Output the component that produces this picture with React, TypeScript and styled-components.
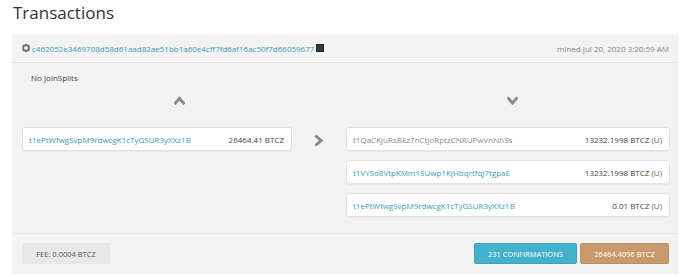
import * as React from 'react';
import styled, { createGlobalStyle } from 'styled-components';

const GlobalStyle = createGlobalStyle`
  body {
    margin: 0;
    background: #fff;
    font-family: "Open Sans", "Liberation Sans", sans-serif;
    color: #333;
  }
`;

const Page = styled.div`
  padding: 1px 12px 0;
`;

const Title = styled.h1`
  margin: 0 0 10px 1px;
  font-size: 17px;
  font-weight: 400;
  line-height: 23px;
  color: #333;
`;

const Panel = styled.div`
  background: #f3f3f3;
  border-right: 1px solid #ececec;
`;

const Header = styled.div`
  display: flex;
  align-items: center;
  height: 28px;
  padding: 0 8px 0 10px;
  border-bottom: 1px solid #e3e3e3;
  font-size: 8px;
`;

const HashLink = styled.a`
  color: #3b9db3;
  text-decoration: none;
  margin-left: 2px;
`;

const CopyIcon = styled.span`
  display: inline-block;
  width: 8px;
  height: 8px;
  margin-left: 2px;
  background: #3a3a3a;
  border: 1px solid #222;
  box-sizing: border-box;
`;

const Mined = styled.span`
  margin-left: auto;
  color: #888;
`;

const Body = styled.div`
  padding: 9px 8px 16px 10px;
  border-bottom: 1px solid #e6e6e6;
`;

const Note = styled.div`
  font-size: 8px;
  line-height: 12px;
  color: #444;
  padding-left: 9px;
`;

const Flow = styled.div`
  display: grid;
  grid-template-columns: 270px 54px 324px;
  margin-top: 11px;
`;

const ChevronCell = styled.div<{ $offset: number }>`
  height: 10px;
  padding-left: ${p => p.$offset}px;
  margin-bottom: 22px;
  display: flex;
  align-items: center;
`;

const Column = styled.div`
  display: flex;
  flex-direction: column;
  gap: 9px;
`;

const ArrowCell = styled.div`
  display: flex;
  justify-content: center;
  padding-top: 1px;
  height: 24px;
  align-items: center;
`;

const AddressBox = styled.div`
  display: flex;
  align-items: center;
  justify-content: space-between;
  height: 24px;
  box-sizing: border-box;
  padding: 0 7px 0 6px;
  background: #fff;
  border: 1px solid #e2e2e2;
  border-radius: 3px;
  box-shadow: 0 1px 1px rgba(0, 0, 0, 0.04);
  font-size: 8px;
`;

const Address = styled.span<{ $muted?: boolean }>`
  color: ${p => (p.$muted ? '#8a8a8a' : '#3b9db3')};
`;

const Amount = styled.span`
  color: #444;
`;

const Unspent = styled.span`
  color: #56703f;
`;

const Footer = styled.div`
  display: flex;
  align-items: center;
  gap: 3px;
  padding: 9px 8px 10px 10px;
`;

const tones = {
  fee: { bg: '#e8e8e8', border: '#e8e8e8', text: '#555' },
  info: { bg: '#42b1cb', border: '#38a3bc', text: '#fff' },
  amount: { bg: '#c99a6b', border: '#bb8c5e', text: '#fff' },
};

const Badge = styled.div<{ $tone: keyof typeof tones; $width: number }>`
  width: ${p => p.$width}px;
  height: 21px;
  box-sizing: border-box;
  display: flex;
  align-items: center;
  justify-content: center;
  white-space: nowrap;
  border-radius: 2px;
  font-size: 7.5px;
  color: ${p => tones[p.$tone].text};
  background: ${p => tones[p.$tone].bg};
  border: 1px solid ${p => tones[p.$tone].border};
`;

const Spacer = styled.div`
  flex: 1;
`;

const Chevron = ({ dir }: { dir: 'up' | 'down' | 'right' }) => {
  const points = {
    up: '1.5,7 5.5,2.5 9.5,7',
    down: '1.5,2.5 5.5,7 9.5,2.5',
    right: '2.5,1.5 7,5.5 2.5,9.5',
  }[dir];
  const w = dir === 'right' ? 10 : 11;
  const h = dir === 'right' ? 11 : 9;
  return (
    <svg width={w} height={h} viewBox={`0 0 ${w} ${h}`}>
      <polyline points={points} fill="none" stroke="#8a8a8a" strokeWidth="3" strokeLinecap="square" />
    </svg>
  );
};

const PlusIcon = () => (
  <svg width="8" height="8" viewBox="0 0 8 8">
    <circle cx="4" cy="4" r="4" fill="#7a7a7a" />
    <path d="M4 2v4M2 4h4" stroke="#fff" strokeWidth="1.3" />
  </svg>
);

const outputs = [
  { address: 't1QaCKjuRsBEz7nCtjoRptzCNRUPwVnNhSs', amount: '13232.1998 BTCZ', muted: true },
  { address: 't1VYSo8VtpKMm1SUwp1KJHbqrtfqj7tgpaE', amount: '13232.1998 BTCZ' },
  { address: 't1ePtWfwgSvpM9rdwcgK1cTyGSUR3yXXz1B', amount: '0.01 BTCZ' },
];

const App = () => (
  <Page>
    <GlobalStyle />
    <Title>Transactions</Title>
    <Panel>
      <Header>
        <PlusIcon />
        <HashLink href="#">c462052e3469708d58d61aad82ae51bb1a60e4cff7fd6af16ac50f7d66059677</HashLink>
        <CopyIcon />
        <Mined>mined Jul 20, 2020 3:20:59 AM</Mined>
      </Header>
      <Body>
        <Note>No JoinSplits</Note>
        <Flow>
          <ChevronCell $offset={152}><Chevron dir="up" /></ChevronCell>
          <div />
          <ChevronCell $offset={161}><Chevron dir="down" /></ChevronCell>
          <Column>
            <AddressBox>
              <Address>t1ePtWfwgSvpM9rdwcgK1cTyGSUR3yXXz1B</Address>
              <Amount>26464.41 BTCZ</Amount>
            </AddressBox>
          </Column>
          <ArrowCell><Chevron dir="right" /></ArrowCell>
          <Column>
            {outputs.map(o => (
              <AddressBox key={o.address + o.amount}>
                <Address $muted={o.muted}>{o.address}</Address>
                <Amount>{o.amount} <Unspent>(U)</Unspent></Amount>
              </AddressBox>
            ))}
          </Column>
        </Flow>
      </Body>
      <Footer>
        <Badge $tone="fee" $width={88}>FEE: 0.0004 BTCZ</Badge>
        <Spacer />
        <Badge $tone="info" $width={103}>231 CONFIRMATIONS</Badge>
        <Badge $tone="amount" $width={89}>26464.4096 BTCZ</Badge>
      </Footer>
    </Panel>
  </Page>
);

export default App;
